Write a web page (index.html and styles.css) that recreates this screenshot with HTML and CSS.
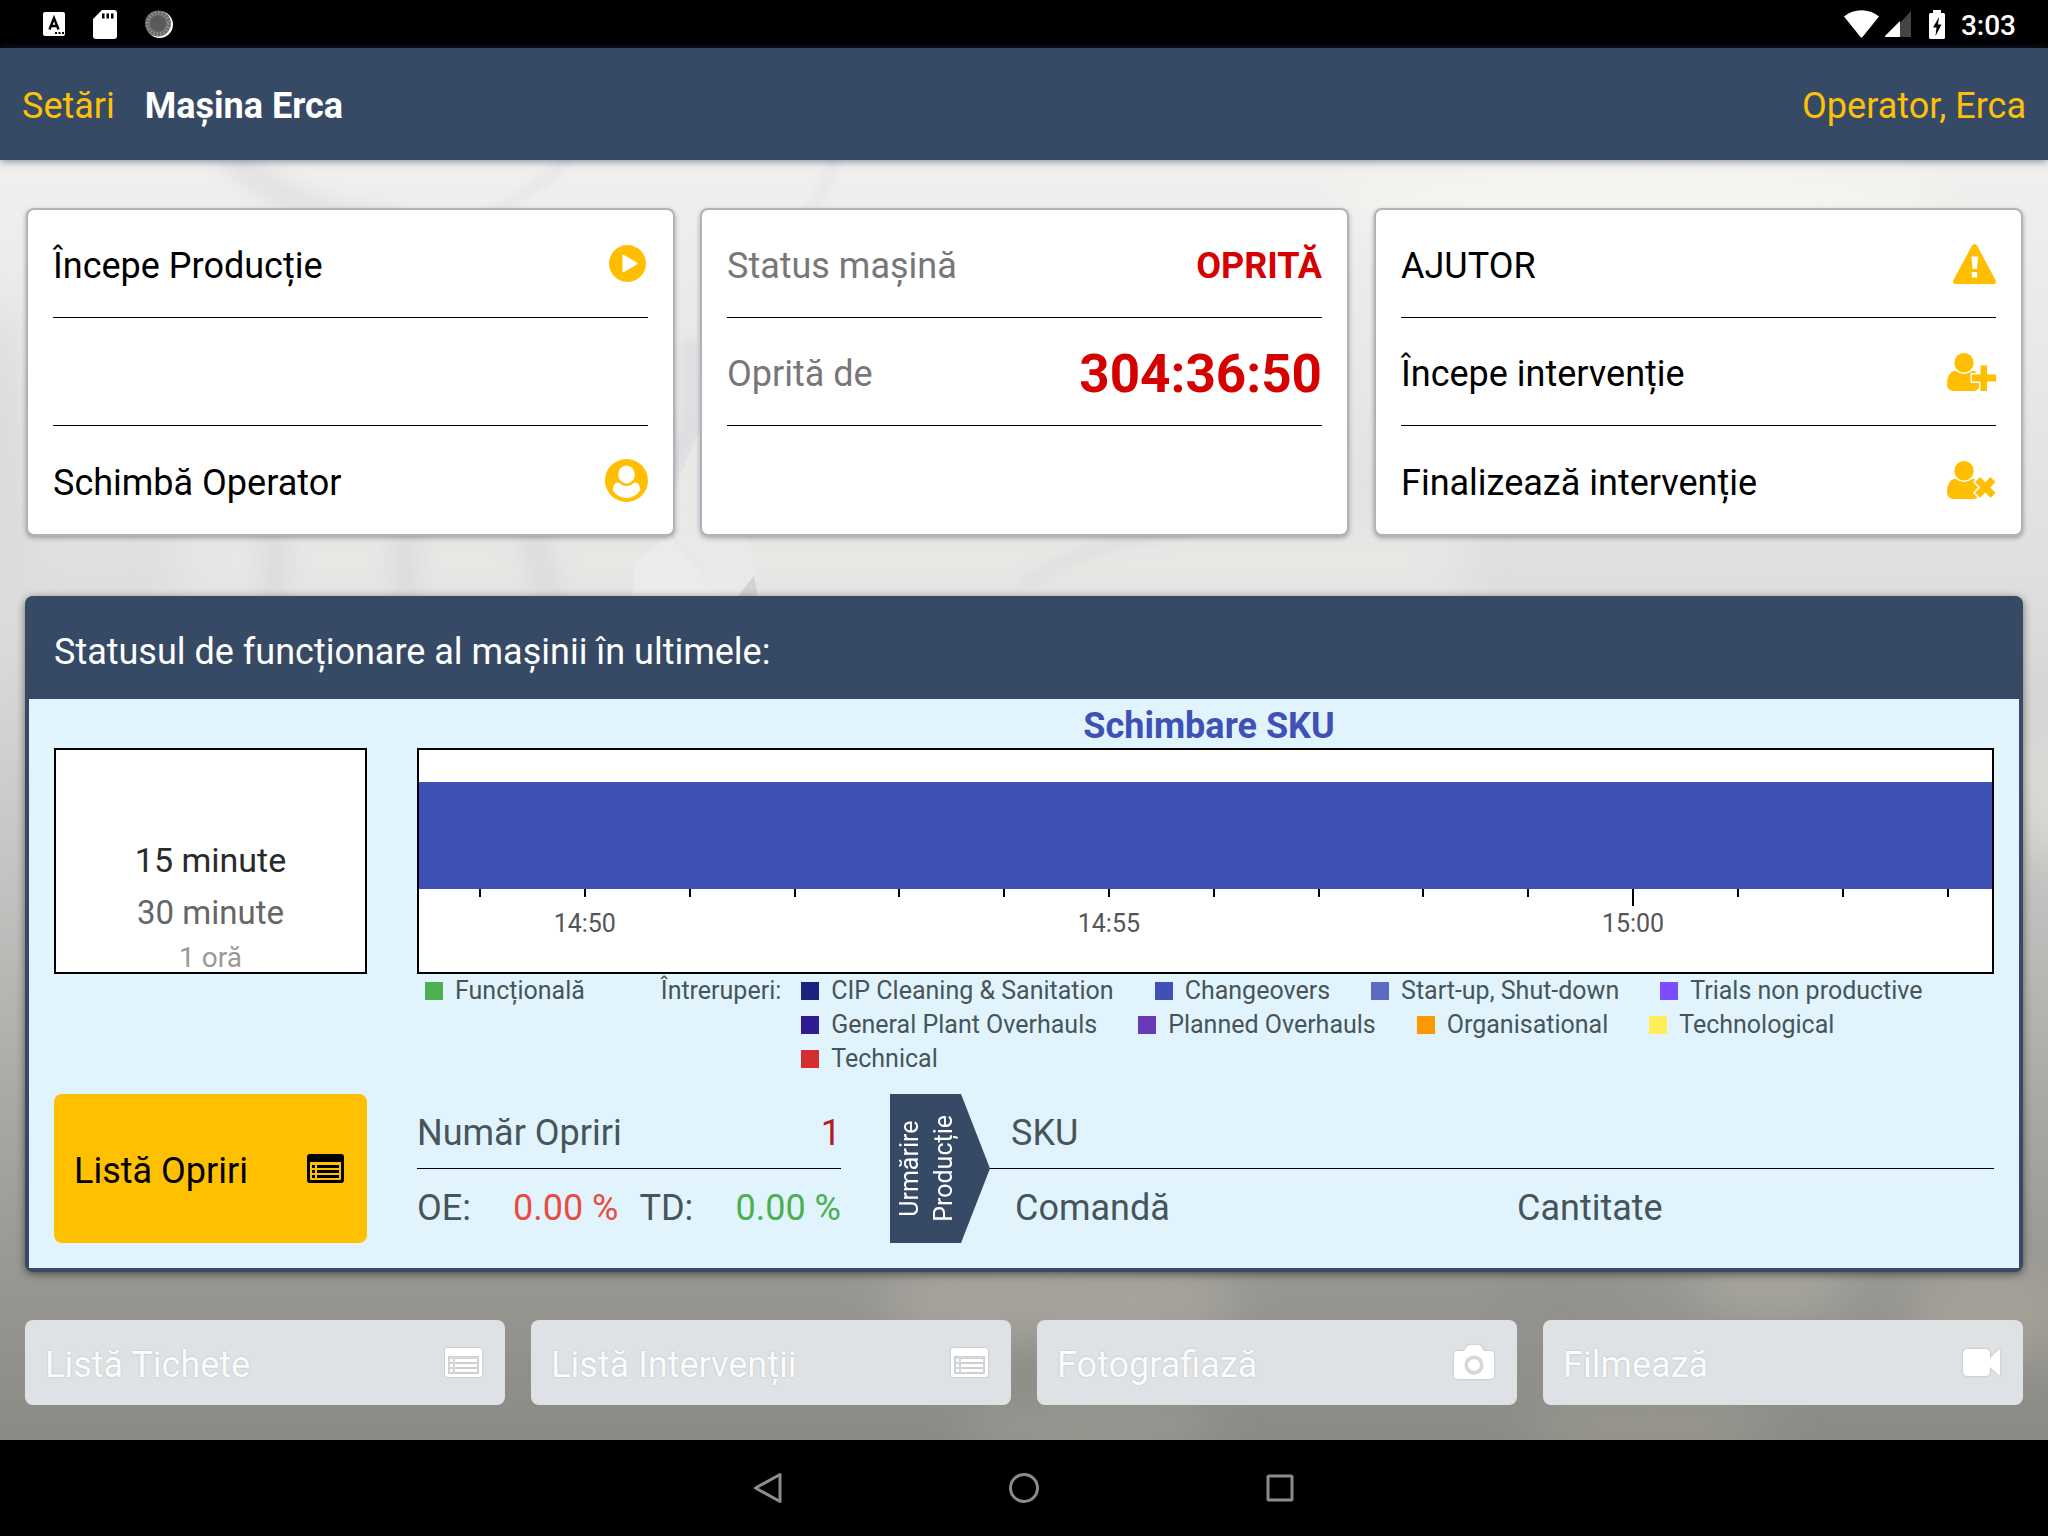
FILE: index.html
```html
<!DOCTYPE html>
<html lang="ro">
<head>
<meta charset="utf-8">
<meta name="viewport" content="width=device-width, initial-scale=1">
<title>Mașina Erca</title>
<link rel="stylesheet" href="styles.css">
</head>
<body>
<svg class="defs" aria-hidden="true">
  <symbol id="i-list" viewBox="0 0 37 29">
    <path fill="currentColor" fill-rule="evenodd" d="M3 0h31a3 3 0 0 1 3 3v23a3 3 0 0 1-3 3H3a3 3 0 0 1-3-3V3a3 3 0 0 1 3-3zM3 8v17q0 1 1 1h29q1 0 1-1V8zM5 11h3v3H5zM10 11h22v3H10zM5 16h3v3H5zM10 16h22v3H10zM5 21h3v3H5zM10 21h22v3H10z"/>
  </symbol>
</svg>

<div class="app">
  <div class="statusbar">
    <div class="statusbar-group">
      <svg class="s-kbd" viewBox="0 0 22 24" aria-hidden="true"><rect width="22" height="24" rx="2" fill="#fff"/><path d="M6.500 17.500 11 6l4.500 11.500M8 14h6" fill="none" stroke="#000" stroke-width="2.400"/><path d="M12 20h2v2h-2zM15.500 20h2v2h-2zM19 20h2v2h-2z"/></svg>
      <svg class="s-sd" viewBox="0 0 24 29" aria-hidden="true"><path fill="#fff" d="M9 0h12a3 3 0 0 1 3 3v23a3 3 0 0 1-3 3H3a3 3 0 0 1-3-3V9z"/><path d="M9 3.500h2.500v5H9zM13.500 3.500H16v5h-2.500zM18 3.500h2.500v5H18z"/></svg>
      <svg class="s-sync" viewBox="0 0 28 28" aria-hidden="true"><circle cx="14.500" cy="14.500" r="13.500" fill="#fff"/><circle cx="13" cy="13.500" r="13" fill="#6b6b6b"/><circle cx="13" cy="13.500" r="10.500" fill="none" stroke="#999" stroke-width="4" stroke-dasharray="1 2.300"/><circle cx="13" cy="13.500" r="8" fill="#5a5a5a"/></svg>
    </div>
    <div class="statusbar-group statusbar-right">
      <svg class="s-wifi" viewBox="0 0 35 28" aria-hidden="true"><path fill="#fff" d="M0 6.500C10-2 25-2 35 6.500L18.500 27q-1 1.200-2 0z"/></svg>
      <svg class="s-cell" viewBox="0 0 26 26" aria-hidden="true"><path fill="#444" d="M26 0v26H2z"/><path fill="#fff" d="M15 10v16H0v-1z"/></svg>
      <svg class="s-batt" viewBox="0 0 16 29" aria-hidden="true"><path fill="#fff" d="M4 0h8v3h2.500q1.500 0 1.500 1.500v23q0 1.500-1.500 1.500h-13Q0 29 0 27.500v-23Q0 3 1.500 3H4z"/><path d="M10 7 4 17.500h3.500L6.500 26 12.500 14.500H9z"/></svg>
      <span class="clock">3:03</span>
    </div>
  </div>

  <header class="topbar">
    <a class="topbar-link" href="#">Setări</a>
    <h1 class="topbar-title">Mașina Erca</h1>
    <a class="topbar-link topbar-user" href="#">Operator, Erca</a>
  </header>

  <main class="content">
    <svg class="backdrop" viewBox="0 0 2048 1280" preserveAspectRatio="none" aria-hidden="true">
      <defs>
        <linearGradient id="bg" x1="0" y1="0" x2="0" y2="1">
          <stop offset="0" stop-color="#f1f0ee"/><stop offset=".16" stop-color="#e8e8e7"/><stop offset=".34" stop-color="#dededd"/><stop offset=".44" stop-color="#d4d3d2"/><stop offset=".56" stop-color="#c4c3c1"/><stop offset=".74" stop-color="#a9a8a5"/><stop offset=".88" stop-color="#979691"/><stop offset="1" stop-color="#8b8a85"/>
        </linearGradient>
        <filter id="b6" x="-20%" y="-20%" width="140%" height="140%"><feGaussianBlur stdDeviation="6"/></filter>
        <filter id="b12" x="-20%" y="-50%" width="140%" height="200%"><feGaussianBlur stdDeviation="12"/></filter>
        <filter id="b20" x="-50%" y="-50%" width="200%" height="200%"><feGaussianBlur stdDeviation="20"/></filter>
      </defs>
      <rect width="2048" height="1280" fill="url(#bg)"/>
      <g filter="url(#b20)">
        <path d="M180 360h1280v80H180z" fill="#e7e7e5"/>
        <ellipse cx="1640" cy="40" rx="300" ry="40" fill="#f4f4f1"/>
        <ellipse cx="0" cy="300" rx="16" ry="160" fill="#d6d6d6"/>
        <ellipse cx="2044" cy="630" rx="16" ry="70" fill="#e4e2df"/>
        <ellipse cx="1060" cy="1140" rx="180" ry="50" fill="#a5a39c"/>
        <ellipse cx="1770" cy="1125" rx="80" ry="30" fill="#a6a49d"/>
        <ellipse cx="1990" cy="1150" rx="80" ry="50" fill="#a3a098"/>
        <ellipse cx="1090" cy="1265" rx="130" ry="30" fill="#989690"/>
        <ellipse cx="1650" cy="1265" rx="130" ry="24" fill="#98968f"/>
        <ellipse cx="1030" cy="1210" rx="16" ry="40" fill="#8a8985"/>
        <ellipse cx="1560" cy="1150" rx="70" ry="40" fill="#92918d"/>
      </g>
      <g filter="url(#b12)" fill="none" stroke="#d9d9d8" stroke-width="22">
        <path d="M275 370v80M405 370v80M530 370l24 80"/>
        <path d="M225-10Q290 60 400 64" stroke="#dededd"/>
      </g>
      <g filter="url(#b6)" fill="none">
        <path d="M480 60Q540 30 575-10" stroke="#e0e0e0" stroke-width="6"/>
        <path d="M800 60Q826 40 836-10" stroke="#e0e2e3" stroke-width="6"/>
        <path d="M1020 430q60-50 170-60" stroke="#dfdfde" stroke-width="12"/>
        <path d="M690 180v90l-20 40" stroke="#d9dcde" stroke-width="12"/>
      </g>
      <path d="M632 436l4-36 34-25 24 30 24 31z" fill="#ecebe9"/>
      <path d="M674 330l26-60v106l38 60h-20l-46-62z" fill="#e9e9e8"/>
      <path d="M700 300l52 90 6 46h-40l-38-60z" fill="#eae9e8"/>
      <path d="M738 436l16-20 4 20z" fill="#d2d2d1"/>
    </svg>

    <section class="cards">
      <div class="card">
        <button class="row" type="button"><span>Începe Producție</span>
          <svg class="i-play" viewBox="0 0 37 37" aria-hidden="true"><circle cx="18.500" cy="18.500" r="18.500" fill="#ffbf00"/><path d="M13.500 10.500v16q.5 1 1.500.5l13-7.500q1-1 0-2L15 10q-1-.5-1.500.5z" fill="#fff"/></svg>
        </button>
        <div class="row"></div>
        <button class="row" type="button"><span>Schimbă Operator</span>
          <svg class="i-user" viewBox="0 0 43 43" aria-hidden="true"><circle cx="21.500" cy="21.500" r="21.500" fill="#ffbf00"/><path d="M10 24.500q-2 2.500-2.500 6.500 5.500 8 14 8t14-8q-.5-4-2.500-6.500-2-1.500-5-.5-6 5-13 0-3-1-5 .5z" fill="#fff"/><ellipse cx="21.500" cy="16" rx="10" ry="11" fill="#ffbf00"/><ellipse cx="21.500" cy="15.500" rx="8.300" ry="9" fill="#fff"/></svg>
        </button>
      </div>
      <div class="card">
        <div class="row"><span class="muted">Status mașină</span><strong class="alert">OPRITĂ</strong></div>
        <div class="row"><span class="muted">Oprită de</span><strong class="alert timer">304:36:50</strong></div>
        <div class="row"></div>
      </div>
      <div class="card">
        <button class="row" type="button"><span>AJUTOR</span>
          <svg class="i-warn" viewBox="0 0 43 40" aria-hidden="true"><path d="M19 1.500q2.500-3 5 0L42.500 36q1.500 4-2 4h-38q-3.500 0-2-4z" fill="#ffbf00"/><path d="M18.500 12.500h6.500l-1 12.500h-4.500zM18.800 28h5.400v5.500h-5.400z" fill="#fff"/></svg>
        </button>
        <button class="row" type="button"><span>Începe intervenție</span>
          <svg class="i-person" viewBox="0 0 49 38" aria-hidden="true"><path d="M8 17.500q9 7 18 0 6.500 2 6.500 13.500 0 7-6 7H7q-7 0-7-7 0-11.500 8-13.500z" fill="#ffbf00"/><ellipse cx="17" cy="9.800" rx="9.600" ry="9.800" fill="#ffbf00"/><path d="M33.500 12.500h6.500v9h9v7h-9V38h-6.500v-9.500H25v-7h8.500z" fill="#ffbf00" stroke="#fff" stroke-width="3" paint-order="stroke"/></svg>
        </button>
        <button class="row" type="button"><span>Finalizează intervenție</span>
          <svg class="i-person" viewBox="0 0 49 38" aria-hidden="true"><path d="M8 17.500q9 7 18 0 6.500 2 6.500 13.500 0 7-6 7H7q-7 0-7-7 0-11.500 8-13.500z" fill="#ffbf00"/><ellipse cx="17" cy="9.800" rx="9.600" ry="9.800" fill="#ffbf00"/><path d="M33 16l5.300 5.300L43.500 16l5 5-5.200 5.400 5.200 5.300-5 5-5.200-5.200-5.300 5.200-5-5 5.300-5.300-5.300-5.400z" fill="#ffbf00" stroke="#fff" stroke-width="3" paint-order="stroke"/></svg>
        </button>
      </div>
    </section>

    <section class="panel">
      <h2 class="panel-head">Statusul de funcționare al mașinii în ultimele:</h2>
      <div class="panel-body">
        <h3 class="chart-title">Schimbare SKU</h3>
        <fieldset class="picker" aria-label="Interval">
          <label class="opt opt-on"><input type="radio" name="interval" checked>15 minute</label>
          <label class="opt opt-next"><input type="radio" name="interval">30 minute</label>
          <label class="opt opt-far"><input type="radio" name="interval">1 oră</label>
        </fieldset>
        <div class="chart">
          <div class="band"></div>
          <div class="axis">
            <i class="tick" style="left:3.900%"></i>
            <i class="tick" style="left:10.540%"></i>
            <i class="tick" style="left:17.210%"></i>
            <i class="tick" style="left:23.880%"></i>
            <i class="tick" style="left:30.540%"></i>
            <i class="tick" style="left:37.200%"></i>
            <i class="tick" style="left:43.860%"></i>
            <i class="tick" style="left:50.530%"></i>
            <i class="tick" style="left:57.190%"></i>
            <i class="tick" style="left:63.850%"></i>
            <i class="tick" style="left:70.520%"></i>
            <i class="tick tick-major" style="left:77.180%"></i>
            <i class="tick" style="left:83.840%"></i>
            <i class="tick" style="left:90.510%"></i>
            <i class="tick" style="left:97.180%"></i>
            <span class="time" style="left:10.540%">14:50</span>
            <span class="time" style="left:43.860%">14:55</span>
            <span class="time" style="left:77.180%">15:00</span>
          </div>
        </div>
        <div class="legend">
          <span class="key k-run">Funcțională</span>
          <span class="legend-label">Întreruperi:</span>
          <div class="legend-keys">
            <div class="legend-row"><span class="key k-cip">CIP Cleaning &amp; Sanitation</span><span class="key k-chg">Changeovers</span><span class="key k-sus">Start-up, Shut-down</span><span class="key k-tri">Trials non productive</span></div>
            <div class="legend-row"><span class="key k-gpo">General Plant Overhauls</span><span class="key k-plo">Planned Overhauls</span><span class="key k-org">Organisational</span><span class="key k-tlg">Technological</span></div>
            <div class="legend-row"><span class="key k-tch">Technical</span></div>
          </div>
        </div>
        <button class="stops" type="button"><span>Listă Opriri</span><svg class="i-list" aria-hidden="true"><use href="#i-list"/></svg></button>
        <div class="summary">
          <div class="stats">
            <div class="stat-row stat-line"><span>Număr Opriri</span><span class="count">1</span></div>
            <div class="stat-row stat-pair">
              <div class="stat"><span>OE:</span><span class="oe">0.00 %</span></div>
              <div class="stat"><span>TD:</span><span class="td">0.00 %</span></div>
            </div>
          </div>
          <div class="tag"><span class="tag-text">Urmărire<br>Producție</span></div>
          <div class="order">
            <div class="stat-row stat-line order-sku">SKU</div>
            <div class="stat-row order-pair"><span>Comandă</span><span>Cantitate</span></div>
          </div>
        </div>
      </div>
    </section>

    <section class="actions">
      <button class="action" type="button" disabled><span>Listă Tichete</span><svg class="i-list" aria-hidden="true"><use href="#i-list"/></svg></button>
      <button class="action" type="button" disabled><span>Listă Intervenții</span><svg class="i-list" aria-hidden="true"><use href="#i-list"/></svg></button>
      <button class="action" type="button" disabled><span>Fotografiază</span><svg class="i-cam" viewBox="0 0 40 34" aria-hidden="true"><path fill="#fff" fill-rule="evenodd" d="M4 6h6l3-4.500Q14 0 16 0h8q2 0 3 1.500L30 6h6q4 0 4 4v20q0 4-4 4H4q-4 0-4-4V10q0-4 4-4zm16 4.500a9.500 9.500 0 1 0 0 19 9.500 9.500 0 0 0 0-19zm0 3.500a6 6 0 1 1 0 12 6 6 0 0 1 0-12z"/></svg></button>
      <button class="action" type="button" disabled><span>Filmează</span><svg class="i-video" viewBox="0 0 37 27" aria-hidden="true"><path fill="#fff" d="M5 0h17q5 0 5 5v4l8.500-8Q37 0 37 2v23q0 2-1.500 1L27 18v4q0 5-5 5H5q-5 0-5-5V5q0-5 5-5z"/></svg></button>
    </section>
  </main>

  <nav class="navbar">
    <button class="nav-btn" type="button" aria-label="Înapoi"><svg class="i-nav" viewBox="0 0 32 32" aria-hidden="true"><path d="M28 2.500v27L3.500 16z" fill="none" stroke="#8c8c8c" stroke-width="3" stroke-linejoin="round"/></svg></button>
    <button class="nav-btn" type="button" aria-label="Acasă"><svg class="i-nav" viewBox="0 0 32 32" aria-hidden="true"><circle cx="16" cy="16" r="13.500" fill="none" stroke="#8c8c8c" stroke-width="3"/></svg></button>
    <button class="nav-btn" type="button" aria-label="Recente"><svg class="i-nav" viewBox="0 0 32 32" aria-hidden="true"><rect x="4" y="4" width="24" height="24" rx="1" fill="none" stroke="#8c8c8c" stroke-width="3"/></svg></button>
  </nav>
</div>
</body>
</html>
```
FILE: styles.css
```css
*,
*::before,
*::after {
  box-sizing: border-box;
}

body {
  margin: 0;
  font-family: Roboto, "Liberation Sans", sans-serif;
  font-size: 36px;
  line-height: 42px;
  color: #000;
  background: #000;
}

h1,
h2,
h3 {
  margin: 0;
  font-size: inherit;
}

button {
  margin: 0;
  padding: 0;
  border: 0;
  background: none;
  font: inherit;
  color: inherit;
  text-align: left;
}

svg {
  display: block;
  flex: none;
}

.defs {
  position: absolute;
  width: 0;
  height: 0;
}

.app {
  display: flex;
  flex-direction: column;
  min-height: 100vh;
}

/* System status bar */
.statusbar {
  display: flex;
  justify-content: space-between;
  align-items: center;
  height: 48px;
  padding: 0 32px 0 43px;
  background: #000;
  color: #fff;
}

.statusbar-group {
  display: flex;
  align-items: center;
  gap: 28px;
}

.statusbar-right {
  gap: 6px;
}

.s-kbd { width: 22px; height: 24px; }
.s-sd { width: 24px; height: 29px; }
.s-sync { width: 28px; height: 28px; }
.s-wifi { width: 35px; height: 28px; }
.s-cell { width: 26px; height: 26px; margin-right: 12px; }
.s-batt { width: 16px; height: 29px; margin-right: 10px; }

.clock {
  font-size: 28px;
  font-weight: 500;
  line-height: 32px;
  padding-top: 4px;
}

/* Application header */
.topbar {
  position: relative;
  z-index: 1;
  display: flex;
  align-items: center;
  gap: 30px;
  height: 112px;
  padding: 4px 22px 0;
  background: #364a66;
  color: #fff;
  box-shadow: 0 1px 8px rgba(40, 60, 100, .6);
}

.topbar-title {
  font-weight: 700;
}

.topbar-link {
  color: #ffc107;
  text-decoration: none;
}

.topbar-user {
  margin-left: auto;
}

.content {
  position: relative;
  flex: 1;
  padding: 48px 25px 35px;
}

.backdrop {
  position: absolute;
  inset: 0;
  z-index: -1;
  width: 100%;
  height: 100%;
}

/* Cards */
.cards {
  display: grid;
  grid-template-columns: repeat(3, 1fr);
  gap: 25px;
  padding-left: 1px;
}

.card {
  display: flex;
  flex-direction: column;
  padding: 0 25px;
  border: 2px solid #b0b3bb;
  border-radius: 8px;
  background: #fff;
  box-shadow: 0 2px 5px rgba(0, 0, 0, .3);
}

.row {
  display: flex;
  align-items: center;
  justify-content: space-between;
  width: 100%;
  min-height: 108px;
  padding-top: 5px;
  border-bottom: 1px solid #000;
}

.row:last-child {
  border-bottom: 0;
}

.muted {
  color: #777;
}

.alert {
  color: #d50000;
}

.timer {
  font-size: 53px;
  line-height: 64px;
}

.row svg { margin-bottom: 5px; }
.i-play { width: 37px; height: 37px; margin-right: 2px; }
.i-user { width: 43px; height: 43px; }
.i-warn { width: 43px; height: 40px; }
.i-person { width: 49px; height: 38px; }

/* Status panel */
.panel {
  margin-top: 60px;
  border: 4px solid #364a66;
  border-top: 0;
  border-radius: 8px;
  background: #364a66;
  box-shadow: 0 2px 8px rgba(0, 0, 0, .5);
}

.panel-head {
  padding: 35px 25px 26px;
  font-weight: 400;
  color: #fff;
}

.panel-body {
  display: grid;
  grid-template-columns: 313px 1fr;
  column-gap: 50px;
  padding: 0 25px 25px;
  background: #e1f4fd;
  color: #475459;
}

.chart-title {
  grid-column: 2;
  padding: 6px 0 1px 7px;
  text-align: center;
  color: #3f51b5;
}

.picker {
  display: flex;
  flex-direction: column;
  height: 226px;
  margin: 0;
  padding: 84px 0 0;
  border: 2px solid #000;
  background: #fff;
  text-align: center;
  overflow: hidden;
}

.opt input {
  position: absolute;
  opacity: 0;
  width: 1px;
  height: 1px;
  margin: 0;
}

.opt-on {
  font-size: 34px;
  line-height: 52px;
  color: #2a2a2a;
}

.opt-next {
  font-size: 33px;
  line-height: 54px;
  color: #666;
}

.opt-far {
  font-size: 28px;
  line-height: 36px;
  color: #999;
}

.chart {
  height: 226px;
  padding-top: 32px;
  border: 2px solid #000;
  background: #fff;
}

.band {
  height: 107px;
  background: #3f51b5;
}

.axis {
  position: relative;
  height: 60px;
}

.tick {
  position: absolute;
  top: 0;
  width: 2px;
  height: 8px;
  margin-left: -1px;
  background: #000;
}

.tick-major {
  height: 17px;
}

.time {
  position: absolute;
  top: 19px;
  transform: translateX(-50%);
  font-size: 25px;
  line-height: 32px;
  color: #555;
}

.legend {
  grid-column: 2;
  display: flex;
  align-items: flex-start;
  padding: 0 0 18px 8px;
  font-size: 25px;
  line-height: 34px;
  white-space: nowrap;
}

.legend-label {
  margin: 0 20px 0 76px;
}

.legend-row {
  display: flex;
  gap: 41px;
}

.key {
  display: flex;
  align-items: center;
  gap: 12px;
}

.key::before {
  content: "";
  width: 18px;
  height: 18px;
  background: currentColor;
}

.k-run::before { background: #4caf50; }
.k-cip::before { background: #1a237e; }
.k-chg::before { background: #3f51b5; }
.k-sus::before { background: #5c6bc0; }
.k-tri::before { background: #7c4dff; }
.k-gpo::before { background: #311b92; }
.k-plo::before { background: #673ab7; }
.k-org::before { background: #ff9800; }
.k-tlg::before { background: #ffee58; }
.k-tch::before { background: #d32f2f; }

.stops {
  display: flex;
  align-items: center;
  justify-content: space-between;
  height: 149px;
  padding: 4px 23px 0 20px;
  border-radius: 8px;
  background: #ffc000;
  color: #000;
}

.i-list {
  width: 37px;
  height: 29px;
  margin-bottom: 5px;
}

.summary {
  display: flex;
}

.stats {
  width: 424px;
  margin-right: 49px;
}

.stat-row {
  height: 74px;
  padding-top: 4px;
  display: flex;
  align-items: center;
  justify-content: space-between;
}

.stat-line {
  height: 75px;
  border-bottom: 1px solid #000;
}

.stat-pair {
  gap: 21px;
}

.stat {
  flex: 1;
  display: flex;
  justify-content: space-between;
}

.count { color: #b71c1c; }
.oe { color: #e84c40; }
.td { color: #4caf50; }

.tag {
  display: flex;
  align-items: center;
  width: 100px;
  padding-left: 3px;
  background: #364a66;
  clip-path: polygon(0 0, 71% 0, 100% 50%, 71% 100%, 0 100%);
  color: #fff;
}

.tag-text {
  writing-mode: vertical-rl;
  transform: rotate(180deg);
  font-size: 25px;
  line-height: 34px;
  text-align: center;
}

.order {
  flex: 1;
}

.order-sku {
  padding-left: 21px;
}

.order-pair {
  display: grid;
  grid-template-columns: 1fr 1fr;
}

.order-pair span {
  padding-left: 25px;
}

/* Bottom actions */
.actions {
  display: grid;
  grid-template-columns: repeat(4, 1fr);
  gap: 26px;
  margin-top: 48px;
}

.action {
  display: flex;
  align-items: center;
  justify-content: space-between;
  height: 85px;
  padding: 4px 23px 0 20px;
  border-radius: 8px;
  background: #dfe2e5;
  color: #fafbfc;
  text-shadow: 0 0 2px rgba(0, 0, 0, .2);
}

.action svg {
  filter: drop-shadow(0 0 1px rgba(0, 0, 0, .2));
  color: #fff;
}

.i-cam { width: 40px; height: 34px; margin-bottom: 5px; }
.i-video { width: 37px; height: 27px; margin-bottom: 4px; }

/* System navigation */
.navbar {
  display: flex;
  align-items: center;
  justify-content: center;
  height: 96px;
  background: #000;
}

.nav-btn {
  display: flex;
  justify-content: center;
  width: 256px;
}

.i-nav {
  width: 32px;
  height: 32px;
}
```
